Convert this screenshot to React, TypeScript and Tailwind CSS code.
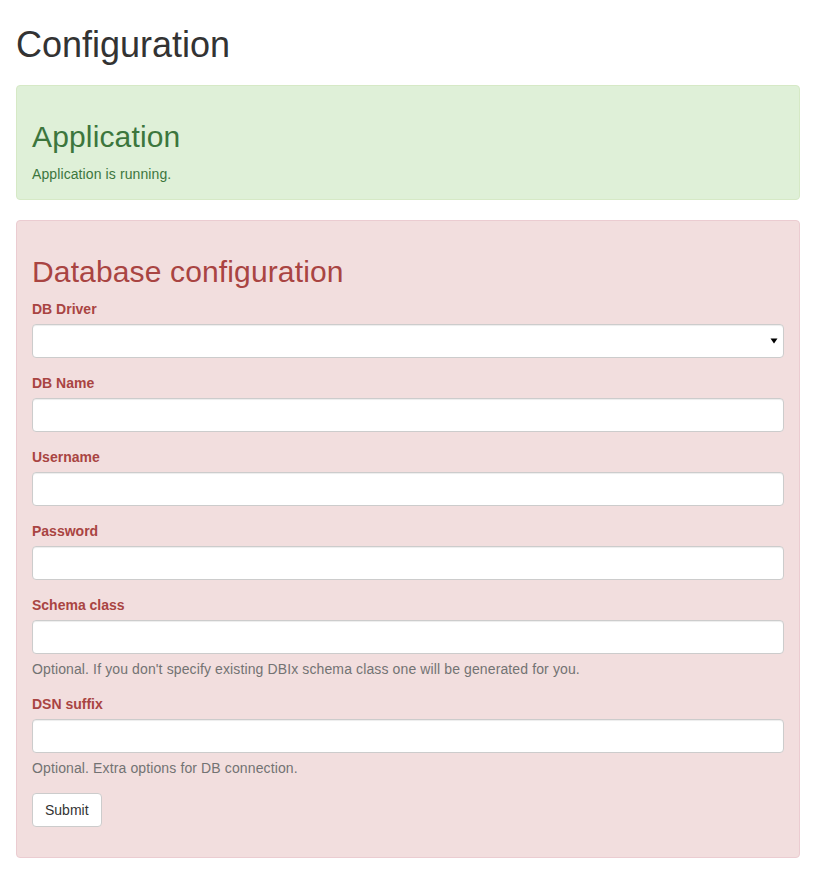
import React from 'react'

const fields = [
  { label: 'DB Name' },
  { label: 'Username' },
  { label: 'Password', type: 'password' },
  { label: 'Schema class', help: "Optional. If you don't specify existing DBIx schema class one will be generated for you." },
  { label: 'DSN suffix', help: 'Optional. Extra options for DB connection.' },
]

const inputCls =
  'block w-full h-[34px] px-3 py-[6px] text-[14px] text-[#555] bg-white border border-[#ccc] rounded-[4px] shadow-[inset_0_1px_1px_rgba(0,0,0,0.075)] outline-none'

export default function App() {
  return (
    <div className="pl-4 pr-[15px] pt-[25px] pb-5 text-[14px] leading-[20px] text-[#333] bg-white min-h-screen" style={{ fontFamily: '"Liberation Sans", Arial, sans-serif' }}>
      <h1 className="text-[36px] leading-[1.1] font-normal mb-[20px]">Configuration</h1>

      {/* Application status */}
      <div className="px-[15px] pb-[15px] pt-[34px] mb-5 border border-[#d6e9c6] bg-[#dff0d8] text-[#3c763d] rounded-[4px]">
        <h2 className="text-[30px] leading-[1.1] mb-[11px] tracking-[0.15px]">Application</h2>
        <p className="tracking-[0.1px]">Application is running.</p>
      </div>

      {/* Database form */}
      <div className="px-[15px] pt-[34px] pb-[15px] border border-[#ebccd1] bg-[#f2dede] text-[#a94442] rounded-[4px]">
        <h2 className="text-[30px] leading-[1.1] mb-[11px] tracking-[0.14px]">Database configuration</h2>
        <form onSubmit={(e) => e.preventDefault()}>
          <div className="mb-[15px]">
            <label className="block font-bold mb-[5px]">DB Driver</label>
            <div className="relative">
              <select className={inputCls + ' appearance-none'} defaultValue="">
                <option value=""></option>
              </select>
              <svg className="absolute right-[6px] top-[14px] pointer-events-none" width="8" height="6" viewBox="0 0 8 6">
                <path d="M0.5 0.5 H7.5 L4 5.5 Z" fill="#000" />
              </svg>
            </div>
          </div>

          {fields.map((f) => (
            <div key={f.label} className="mb-[15px]">
              <label className="block font-bold mb-[5px]">{f.label}</label>
              <input type={f.type ?? 'text'} className={inputCls} />
              {f.help && <p className="mt-[5px] text-[#737373] tracking-[0.12px]">{f.help}</p>}
            </div>
          ))}

          <div className="mb-[15px]">
            <button type="submit" className="h-[34px] px-3 bg-white border border-[#ccc] rounded-[4px] text-[#333]">
              Submit
            </button>
          </div>
        </form>
      </div>
    </div>
  )
}
